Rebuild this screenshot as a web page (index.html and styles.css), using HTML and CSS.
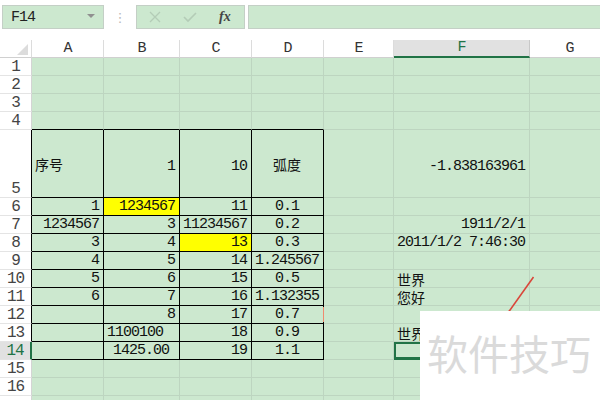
FILE: index.html
```html
<!DOCTYPE html>
<html>
<head>
<meta charset="utf-8">
<link rel="stylesheet" href="styles.css">
</head>
<body>
<div class="toolbar">
  <div class="namebox"><span>F14</span><span class="dd"></span></div>
  <div class="dots">⋮</div>
  <div class="fxbox">
    <svg class="ic" width="14" height="14" viewBox="0 0 14 14"><path d="M2 2L12 12M12 2L2 12" stroke="#b4ccb7" stroke-width="1.3" fill="none"/></svg>
    <svg class="ic" width="16" height="14" viewBox="0 0 16 14"><path d="M2 7L6 11L14 3" stroke="#b4ccb7" stroke-width="1.6" fill="none"/></svg>
    <span class="fx">fx</span>
  </div>
  <div class="formula"></div>
</div>
<div class="sheet">
  <div class="row hdr">
    <div class="corner"><span class="tri"></span></div>
    <div class="ch">A</div><div class="ch">B</div><div class="ch">C</div><div class="ch">D</div><div class="ch">E</div><div class="ch act">F</div><div class="ch">G</div>
  </div>
  <div class="row"><div class="rh">1</div><div class="c"></div><div class="c"></div><div class="c"></div><div class="c"></div><div class="c"></div><div class="c"></div><div class="c"></div></div>
  <div class="row"><div class="rh">2</div><div class="c"></div><div class="c"></div><div class="c"></div><div class="c"></div><div class="c"></div><div class="c"></div><div class="c"></div></div>
  <div class="row"><div class="rh">3</div><div class="c"></div><div class="c"></div><div class="c"></div><div class="c"></div><div class="c"></div><div class="c"></div><div class="c"></div></div>
  <div class="row"><div class="rh">4</div><div class="c bt"></div><div class="c bt"></div><div class="c bt"></div><div class="c bt"></div><div class="c"></div><div class="c"></div><div class="c"></div></div>
  <div class="row tall"><div class="rh bl bottom">5</div><div class="c b cn">序号</div><div class="c b r">1</div><div class="c b r">10</div><div class="c b m cn">弧度</div><div class="c"></div><div class="c r">-1.838163961</div><div class="c"></div></div>
  <div class="row"><div class="rh bl">6</div><div class="c b r">1</div><div class="c b r y">1234567</div><div class="c b r">11</div><div class="c b m">0.1</div><div class="c"></div><div class="c"></div><div class="c"></div></div>
  <div class="row"><div class="rh bl">7</div><div class="c b r">1234567</div><div class="c b r">3</div><div class="c b r">11234567</div><div class="c b m">0.2</div><div class="c"></div><div class="c r">1911/2/1</div><div class="c"></div></div>
  <div class="row"><div class="rh bl">8</div><div class="c b r">3</div><div class="c b r">4</div><div class="c b r y">13</div><div class="c b m">0.3</div><div class="c"></div><div class="c r">2011/1/2 7:46:30</div><div class="c"></div></div>
  <div class="row"><div class="rh bl">9</div><div class="c b r">4</div><div class="c b r">5</div><div class="c b r">14</div><div class="c b m">1.245567</div><div class="c"></div><div class="c"></div><div class="c"></div></div>
  <div class="row"><div class="rh bl">10</div><div class="c b r">5</div><div class="c b r">6</div><div class="c b r">15</div><div class="c b m">0.5</div><div class="c"></div><div class="c cn">世界</div><div class="c"></div></div>
  <div class="row"><div class="rh bl">11</div><div class="c b r">6</div><div class="c b r">7</div><div class="c b r">16</div><div class="c b m">1.132355</div><div class="c"></div><div class="c cn">您好</div><div class="c"></div></div>
  <div class="row"><div class="rh bl">12</div><div class="c b"></div><div class="c b r">8</div><div class="c b r">17</div><div class="c b m">0.7</div><div class="c"></div><div class="c"></div><div class="c"></div></div>
  <div class="row"><div class="rh bl">13</div><div class="c b"></div><div class="c b">1100100</div><div class="c b r">18</div><div class="c b m">0.9</div><div class="c"></div><div class="c cn">世界</div><div class="c"></div></div>
  <div class="row"><div class="rh bl act">14</div><div class="c b"></div><div class="c b m">1425.00</div><div class="c b r">19</div><div class="c b m">1.1</div><div class="c"></div><div class="c sel"></div><div class="c"></div></div>
  <div class="row"><div class="rh">15</div><div class="c"></div><div class="c"></div><div class="c"></div><div class="c"></div><div class="c"></div><div class="c"></div><div class="c"></div></div>
  <div class="row"><div class="rh">16</div><div class="c"></div><div class="c"></div><div class="c"></div><div class="c"></div><div class="c"></div><div class="c"></div><div class="c"></div></div>
  <div class="row"><div class="rh"></div><div class="c"></div><div class="c"></div><div class="c"></div><div class="c"></div><div class="c"></div><div class="c"></div><div class="c"></div></div>
  <svg class="overlay" width="600" height="360" viewBox="0 0 600 360">
    <line x1="533.5" y1="237" x2="500" y2="284" stroke="#d9463a" stroke-width="1.6"/>
    <line x1="323.5" y1="267" x2="323.5" y2="282" stroke="#f08a70" stroke-width="1"/>
  </svg>
</div>
<div class="watermark">软件技巧</div>
</body>
</html>
```
FILE: styles.css
```css
html, body {
  margin: 0;
  padding: 0;
  background: #ffffff;
  width: 600px;
  height: 400px;
  overflow: hidden;
  position: relative;
  font-family: "Liberation Mono", "Noto Sans CJK SC", monospace;
}
.toolbar {
  height: 40px;
  box-sizing: border-box;
  padding-top: 5px;
  display: flex;
  align-items: flex-start;
}
.namebox {
  margin-left: 2px;
  width: 102px;
  height: 24px;
  box-sizing: border-box;
  border: 1px solid #c4cfc6;
  background: #cce8cf;
  display: flex;
  align-items: center;
  justify-content: space-between;
  padding: 0 8px 0 8px;
  font-size: 15px;
  letter-spacing: -1px;
  color: #222;
}
.dd {
  width: 0;
  height: 0;
  border-left: 4px solid transparent;
  border-right: 4px solid transparent;
  border-top: 4px solid #909090;
  margin-top: -2px;
}
.dots {
  width: 32px;
  height: 24px;
  display: flex;
  align-items: center;
  justify-content: center;
  color: #b8b8b8;
  font-family: "DejaVu Sans", sans-serif;
  font-size: 13px;
}
.fxbox {
  width: 109px;
  height: 24px;
  box-sizing: border-box;
  border: 1px solid #c4cfc6;
  background: #cce8cf;
  display: flex;
  align-items: center;
  padding-left: 11px;
}
.ic { display: block; }
.ic + .ic { margin-left: 20px; }
.fx {
  margin-left: 21px;
  font-family: "Liberation Serif", serif;
  font-style: italic;
  font-weight: bold;
  font-size: 14px;
  color: #444;
  letter-spacing: 0;
}
.formula {
  margin-left: 3px;
  flex: 1;
  height: 24px;
  box-sizing: border-box;
  border: 1px solid #c4cfc6;
  border-right: none;
  background: #cce8cf;
}
.sheet {
  position: relative;
}
.row {
  display: grid;
  grid-template-columns: 32px 72px 76px 72px 72px 70px 136px 80px;
  height: 18px;
}
.row.tall { height: 68px; }
.row > div {
  box-sizing: border-box;
  border-right: 1px solid #bdd5c0;
  border-bottom: 1px solid #bdd5c0;
  display: flex;
  align-items: center;
  white-space: nowrap;
  overflow: hidden;
  font-size: 15px;
  line-height: 16px;
  letter-spacing: -1px;
  color: #111;
}
.hdr > div {
  background: #fff;
  border-right-color: #dcdcdc;
  border-bottom-color: #d0d0d0;
  justify-content: center;
  color: #333;
  font-size: 15px;
}
.corner { position: relative; }
.tri {
  position: absolute;
  right: 3px;
  bottom: 2px;
  width: 0;
  height: 0;
  border-left: 11px solid transparent;
  border-bottom: 11px solid #dcdcdc;
}
.hdr > .ch.act {
  background: #e1e1e1;
  color: #217346;
  border-bottom: 2px solid #217346;
  border-right-color: #c8c8c8;
}
.row > .rh {
  background: #fff;
  justify-content: center;
  color: #444;
  border-right-color: #d4d4d4;
  border-bottom-color: #e4e4e4;
  font-size: 16px;
  letter-spacing: -1px;
}
.row > .rh.bottom { align-items: flex-end; }
.row > .rh.bl { border-right-color: #000; }
.row > .rh.act {
  background: #e1e1e1;
  color: #217346;
  border-right: 2px solid #217346;
}
.row > .c {
  background: #cce8cf;
  padding: 1px 4px 0 3px;
}
.row.tall > .c { padding-top: 6px; }
.row > .r { justify-content: flex-end; }
.row > .m { justify-content: center; }
.row > .b {
  border-right-color: #000;
  border-bottom-color: #000;
}
.row > .bt { border-bottom-color: #000; }
.row > .y { background: #ffff00; }
.row > .cn {
  font-family: "Noto Sans CJK SC", sans-serif;
  font-size: 14px;
  line-height: 15px;
  letter-spacing: 0;
}
.row.tall > .cn { padding-top: 1px; }
.row > .sel {
  box-shadow: inset 0 0 0 2px #217346;
  border-color: #217346;
}
.overlay {
  position: absolute;
  left: 0;
  top: 0;
  pointer-events: none;
}
.watermark {
  position: absolute;
  left: 420px;
  top: 311px;
  width: 180px;
  height: 89px;
  background: #fff;
  color: #dadada;
  font-family: "Noto Sans CJK SC", sans-serif;
  font-size: 41px;
  line-height: 1;
  padding: 21px 0 0 7px;
  box-sizing: border-box;
  letter-spacing: 0;
  white-space: nowrap;
}
```
